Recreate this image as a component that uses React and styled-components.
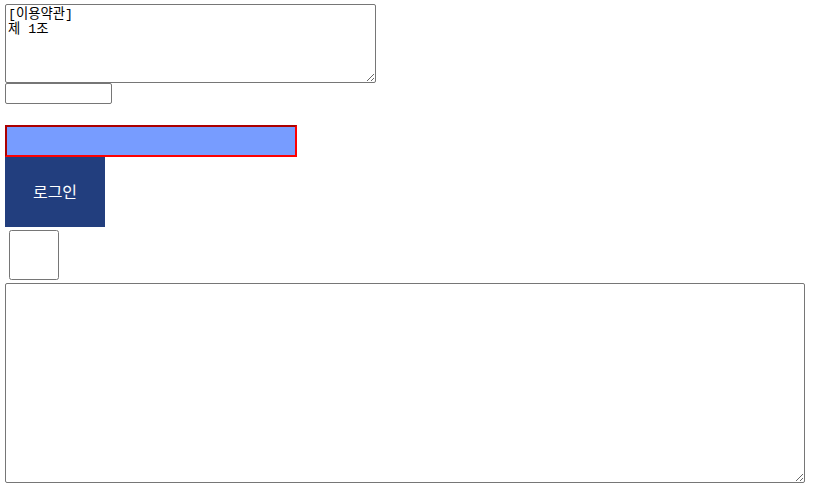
import React from "react";
import styled, { createGlobalStyle } from "styled-components";

const Global = createGlobalStyle`
  html, body { margin: 0; padding: 0; background: #fff; }
  body { font-family: "Liberation Sans", "Noto Sans CJK KR", sans-serif; }
`;

const Page = styled.div`
  display: flex;
  flex-direction: column;
  align-items: flex-start;
  padding: 4px 5px;
`;

const Terms = styled.textarea`
  box-sizing: border-box;
  width: ${(p) => p.$w}px;
  height: ${(p) => p.$h}px;
  margin: 0;
  padding: 2px;
  border: 1px solid #767676;
  border-radius: 2px;
  font-family: "Liberation Mono", "Noto Sans CJK KR", monospace;
  font-size: 13.33px;
  line-height: 15px;
  color: #000;
  background: #fff;
  resize: both;
`;

const SmallInput = styled.input`
  box-sizing: border-box;
  width: 107px;
  height: 21px;
  margin: 0 0 21px 0;
  padding: 1px 2px;
  border: 1px solid #767676;
  border-radius: 2px;
`;

const IdInput = styled.input`
  box-sizing: border-box;
  width: 292px;
  height: 32px;
  margin: 0;
  border: 2px inset red;
  background: #779cff;
  outline: none;
`;

const LoginButton = styled.button`
  box-sizing: border-box;
  width: 100px;
  height: 70px;
  margin: 0;
  padding: 0 0 2px;
  border: none;
  background: #223e7e;
  color: #fff;
  font-family: "Noto Sans CJK KR", sans-serif;
  font-size: 16px;
  cursor: pointer;
`;

const Check = styled.input`
  width: 50px;
  height: 50px;
  margin: 3px 3px 3px 4px;
`;

export default function App() {
  return (
    <>
      <Global />
      <Page>
        <Terms $w={371} $h={79} defaultValue={"[이용약관]\n제 1조"} />
        <SmallInput type="text" />
        <IdInput type="text" />
        <LoginButton>로그인</LoginButton>
        <Check type="checkbox" />
        <Terms $w={800} $h={200} defaultValue="" />
      </Page>
    </>
  );
}
